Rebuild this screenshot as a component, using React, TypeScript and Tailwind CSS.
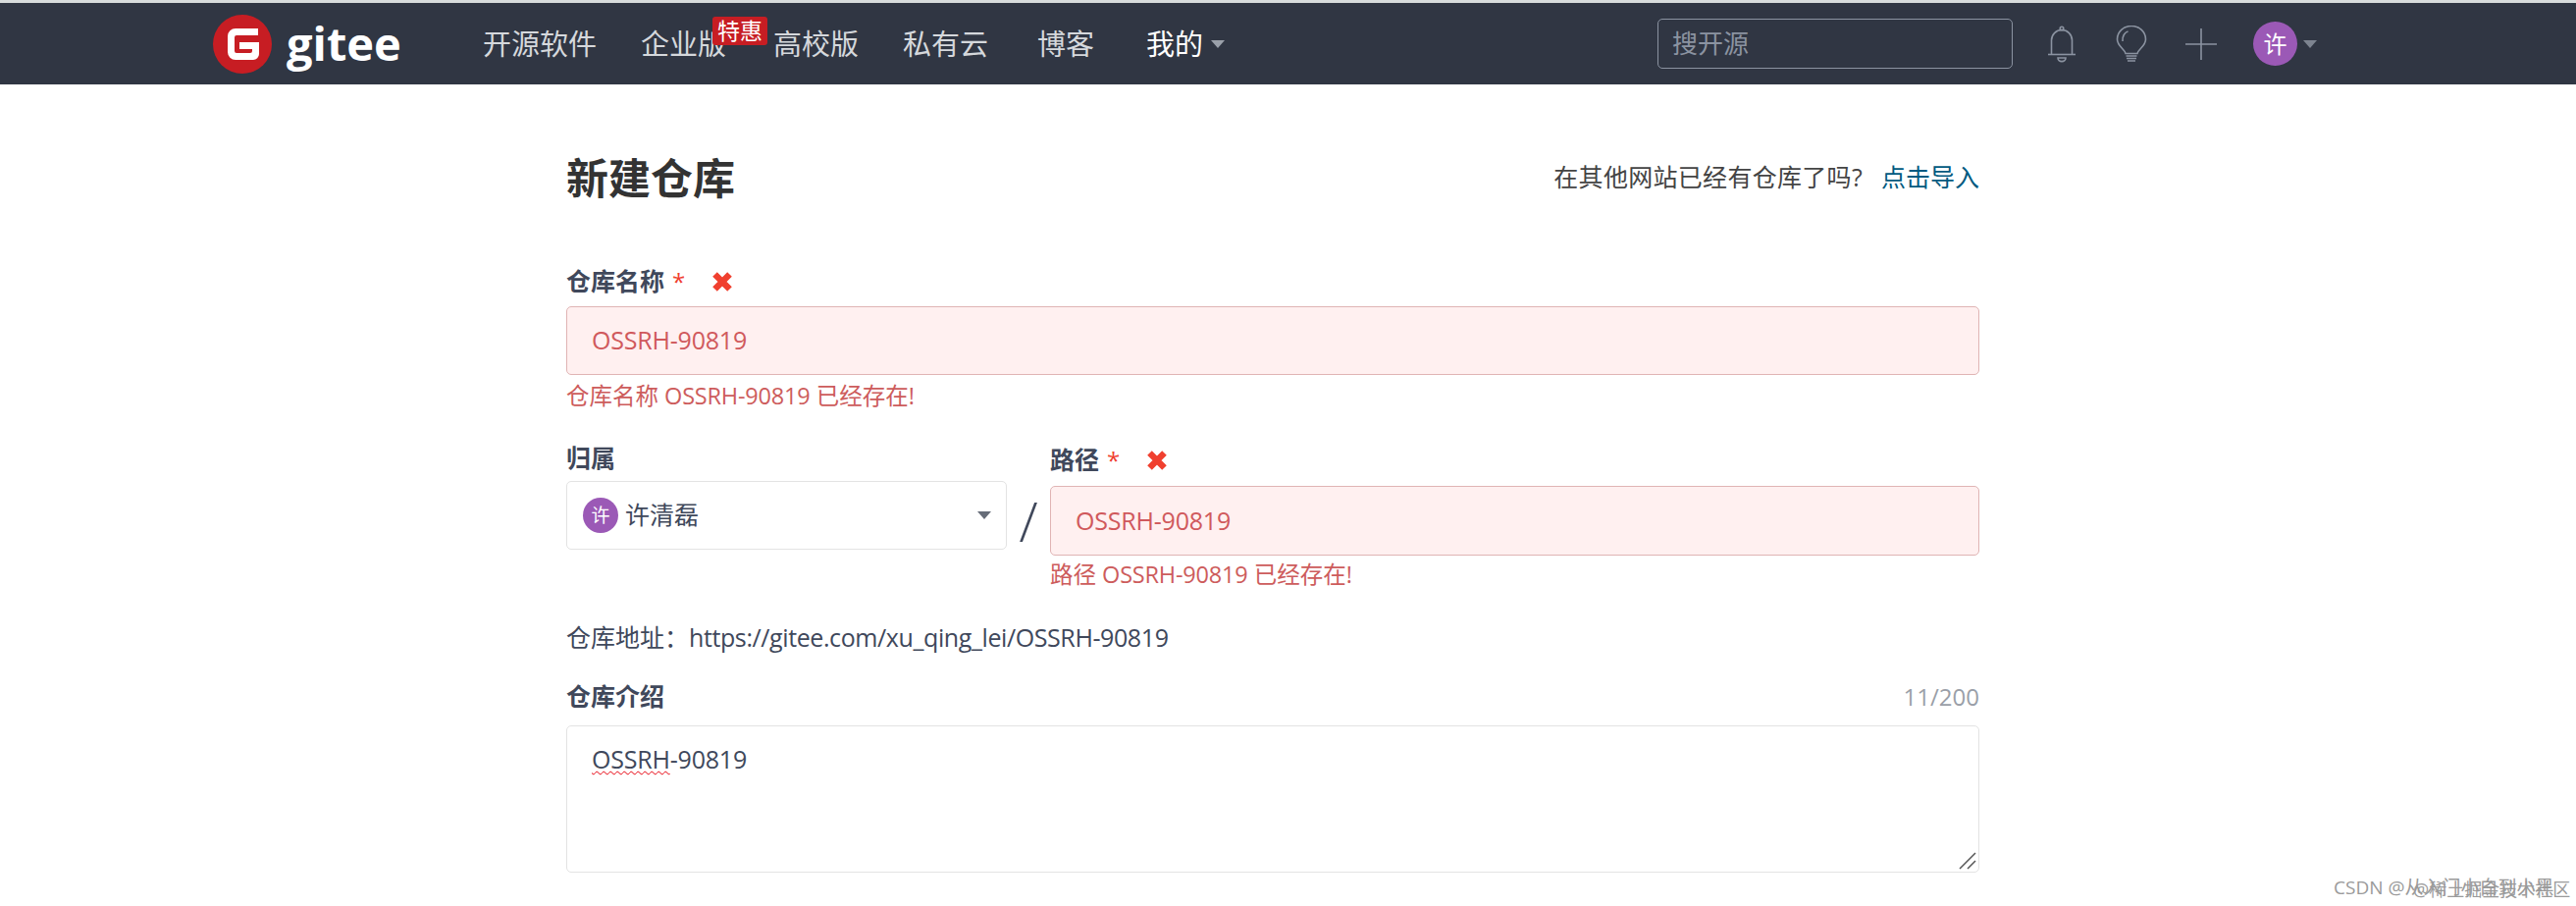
const navItems = [
  { label: "开源软件", className: "mr-[45px]" },
  { label: "企业版", className: "mr-[48px]" },
  { label: "高校版", className: "mr-[45px]" },
  { label: "私有云", className: "mr-[50px]" },
  { label: "博客", className: "mr-[53px]" },
];

const Caret = ({ className }: { className: string }) => (
  <span className={`inline-block h-0 w-0 border-x-[7px] border-t-[8px] border-x-transparent ${className}`} />
);

const GiteeLogo = () => (
  <svg width="60" height="60" viewBox="0 0 60 60">
    <circle cx="30" cy="30" r="30" fill="#c71d23" />
    <path
      d="M15 22a8 8 0 0 1 8-8h23v7H24a2 2 0 0 0-2 2v14a2 2 0 0 0 2 2h14a2 2 0 0 0 2-2v-2H27v-7h20v12a6 6 0 0 1-6 6H23a8 8 0 0 1-8-8z"
      fill="#fff"
    />
  </svg>
);

const BellIcon = () => (
  <svg width="30" height="38" viewBox="0 0 30 38" fill="none" stroke="#8b93a1" strokeWidth="1.6">
    <circle cx="15" cy="3" r="1.8" />
    <path d="M4.5 29V15a10.5 10.5 0 0 1 21 0v14" />
    <path d="M1 29.5h28" />
    <path d="M11 33h8a4 3.6 0 0 1-8 0z" />
  </svg>
);

const BulbIcon = () => (
  <svg width="32" height="38" viewBox="0 0 32 38" fill="none" stroke="#8b93a1" strokeWidth="1.6">
    <path d="M10 28.5C9 24 1.5 21 1.5 14a14.5 13.5 0 0 1 29 0c0 7-7.500 10-8.500 14.500z" />
    <path d="M7 16c-.5-5 2-9 5.500-10" />
    <path d="M10.500 31h11M11 33.500h10M12 36h8" />
  </svg>
);

const PlusIcon = () => (
  <svg width="32" height="32" viewBox="0 0 32 32" stroke="#8b93a1" strokeWidth="1.6">
    <path d="M16 0v32M0 16h32" />
  </svg>
);

// thick blunt cross, heavier than the icon packs' "times"
const CrossIcon = () => (
  <svg className="ml-[28px]" width="20" height="20" viewBox="0 0 20 20" stroke="#f0402f" strokeWidth="6.500" strokeLinejoin="round">
    <path d="M2.500 2.500l15 15M17.500 2.500l-15 15" />
  </svg>
);

const FieldLabel = ({ text, invalid }: { text: string; invalid?: boolean }) => (
  <div className="flex h-[33px] items-center text-[25px] font-bold leading-none text-[#40485b]">
    <span>{text}</span>
    {invalid && (
      <>
        <span className="ml-[8px] text-[24px] font-normal text-[#f0402f]">*</span>
        <CrossIcon />
      </>
    )}
  </div>
);

const ErrorInput = ({ className }: { className: string }) => (
  <div className={`flex items-center rounded-[5px] border border-[#e0b4b4] bg-[#fff0f0] pl-[25px] text-[25px] tracking-[-0.2px] text-[#d0595c] ${className}`}>
    OSSRH-90819
  </div>
);

export default function App() {
  return (
    <div className="relative h-[923px] overflow-hidden bg-white font-['Open_Sans','Noto_Sans_CJK_SC',sans-serif]">
      <header className="flex h-[86px] items-center border-t-[3px] border-[#d8dcdc] bg-[#303643] pl-[217px]">
        <GiteeLogo />
        <span className="ml-[15px] mr-[82px] w-[118px] text-[47px] font-bold leading-none text-white">
          gitee
        </span>
        <nav className="flex items-center text-[29px] text-[#d5d8dc]">
          {navItems.map((item) => (
            <div key={item.label} className={`relative ${item.className}`}>
              {item.label}
              {item.label === "企业版" && (
                <span className="absolute left-[73px] top-[-6px] flex h-[29px] w-[56px] items-center justify-center rounded-[3px] bg-[#c71d23] text-[23px] leading-none text-white">
                  特惠
                </span>
              )}
            </div>
          ))}
          <div className="flex items-center gap-[8px] text-white">
            我的
            <Caret className="border-t-[#9aa0aa]" />
          </div>
        </nav>
        <div className="ml-[441px] flex h-[51px] w-[362px] items-center rounded-[5px] border border-[#8b93a1] pl-[14px] text-[26px] text-[#8b93a1]">
          搜开源
        </div>
        <div className="ml-[35px]"><BellIcon /></div>
        <div className="ml-[40px]"><BulbIcon /></div>
        <div className="ml-[39px]"><PlusIcon /></div>
        <div className="ml-[37px] flex h-[45px] w-[45px] items-center justify-center rounded-full bg-[#9b59b6] text-[24px] text-white">
          许
        </div>
        <Caret className="ml-[6px] border-t-[#7d8490]" />
      </header>

      <main className="ml-[577px] w-[1440px]">
        <div className="mt-[64px] flex h-[62px] items-center justify-between">
          <h1 className="text-[43px] font-bold leading-none text-[#333]">新建仓库</h1>
          <div className="text-[25px] text-[#444]">
            <span className="tracking-[0.3px]">在其他网站已经有仓库了吗?</span>
            <a className="ml-[19px] text-[#005980]">点击导入</a>
          </div>
        </div>

        <div className="mt-[58px]">
          <FieldLabel text="仓库名称" invalid />
          <ErrorInput className="mt-[9px] h-[70px]" />
          <div className="mt-[5px] text-[23.500px] leading-[32px] text-[#cd5c5c]">
            仓库名称 <span className="tracking-[-0.2px]">OSSRH-90819</span> 已经存在!
          </div>
        </div>

        <div className="mt-[31px] flex">
          <div className="w-[449px]">
            <FieldLabel text="归属" />
            <div className="mt-[7px] flex h-[70px] items-center rounded-[5px] border border-[#e3e3e3] pl-[16px] pr-[15px]">
              <span className="flex h-[36px] w-[36px] items-center justify-center rounded-full bg-[#9b59b6] text-[19px] text-white">
                许
              </span>
              <span className="ml-[7px] text-[25px] text-[#40485b]">许清磊</span>
              <Caret className="ml-auto border-t-[#666c78]" />
            </div>
          </div>
          <div className="mt-[50px] flex w-[44px] justify-center text-[56px] font-light leading-[60px] text-[#40485b]">/</div>
          <div className="w-[947px] pt-[2px]">
            <FieldLabel text="路径" invalid />
            <ErrorInput className="mt-[10px] h-[71px]" />
            <div className="mt-[3px] text-[23.500px] leading-[32px] text-[#cd5c5c]">
              路径 <span className="tracking-[-0.2px]">OSSRH-90819</span> 已经存在!
            </div>
          </div>
        </div>

        <div className="mt-[31px] text-[25px] leading-[34px] text-[#40485b]">
          仓库地址：<span className="tracking-[-0.4px]">https://gitee.com/xu_qing_lei/OSSRH-90819</span>
        </div>

        <div className="mt-[27px] flex items-center justify-between">
          <FieldLabel text="仓库介绍" />
          <span className="text-[24px] leading-none text-[#9a9fa8]">11/200</span>
        </div>

        <div className="relative mt-[13px] h-[150px] rounded-[5px] border border-[#e3e3e3] pl-[25px] pt-[16px] text-[25px] leading-[34px] tracking-[-0.2px] text-[#40485b]">
          <span className="underline decoration-red-600 decoration-wavy decoration-1 underline-offset-2">OSSRH</span>-90819
          <svg className="absolute bottom-[2px] right-[2px]" width="18" height="18" viewBox="0 0 18 18" stroke="#555" strokeWidth="1.500">
            <path d="M1 17 17 1M9 17l8-8" />
          </svg>
        </div>
      </main>

      <div className="absolute left-[2378px] top-[893px] whitespace-nowrap text-[19px] leading-[22px] text-[#9a9a9a]">CSDN @从入门小白到小黑</div>
      <div className="absolute left-[2459px] top-[895px] whitespace-nowrap text-[18px] leading-[22px] text-[#9a9a9a]">@稀土掘金技术社区</div>
    </div>
  );
}
